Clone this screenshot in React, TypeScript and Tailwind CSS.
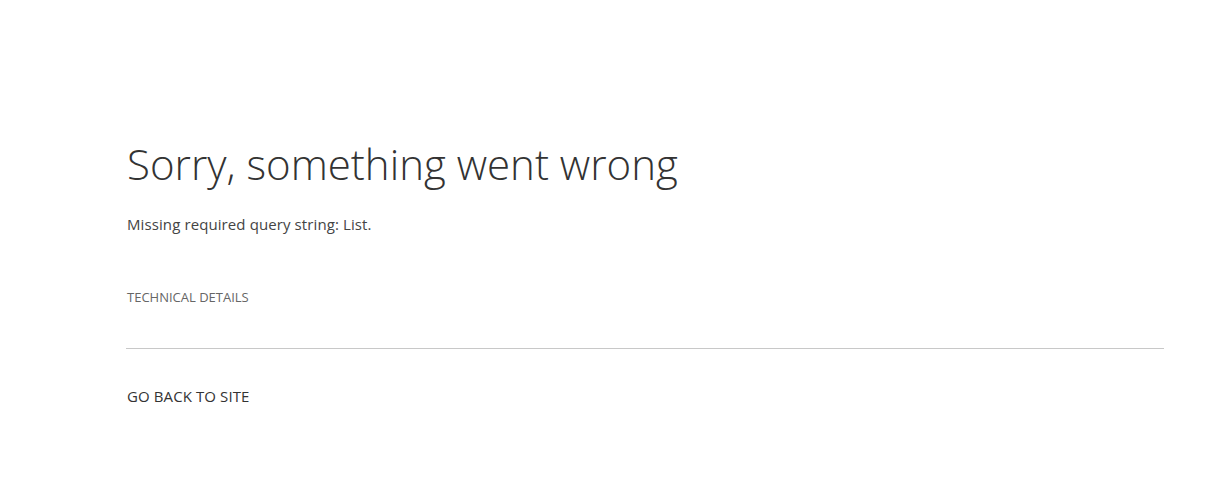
export default function App() {
  return (
    <div className="min-h-[499px] w-full bg-white font-['Open_Sans',sans-serif] text-[#333333]">
      <div className="pl-[126px] pr-[64px] pt-[136px]">
        <h1 className="text-[42px] font-light leading-[56px] text-[#333333] pl-[1px]">Sorry, something went wrong</h1>
        <p className="mt-[22px] text-[15px] leading-[20px] text-[#444444] pl-[1px] tracking-[0.1px]">Missing required query string: List.</p>
        <div className="mt-[55px] text-[13px] leading-[16px] text-[#666666] pl-[1px]">TECHNICAL DETAILS</div>
        <div className="mt-[43px] h-px bg-[#c8c8c8]" />
        <div className="mt-[37px] text-[15px] leading-[20px] text-[#333333] pl-[1px] tracking-[0.1px]">GO BACK TO SITE</div>
      </div>
    </div>
  );
}
